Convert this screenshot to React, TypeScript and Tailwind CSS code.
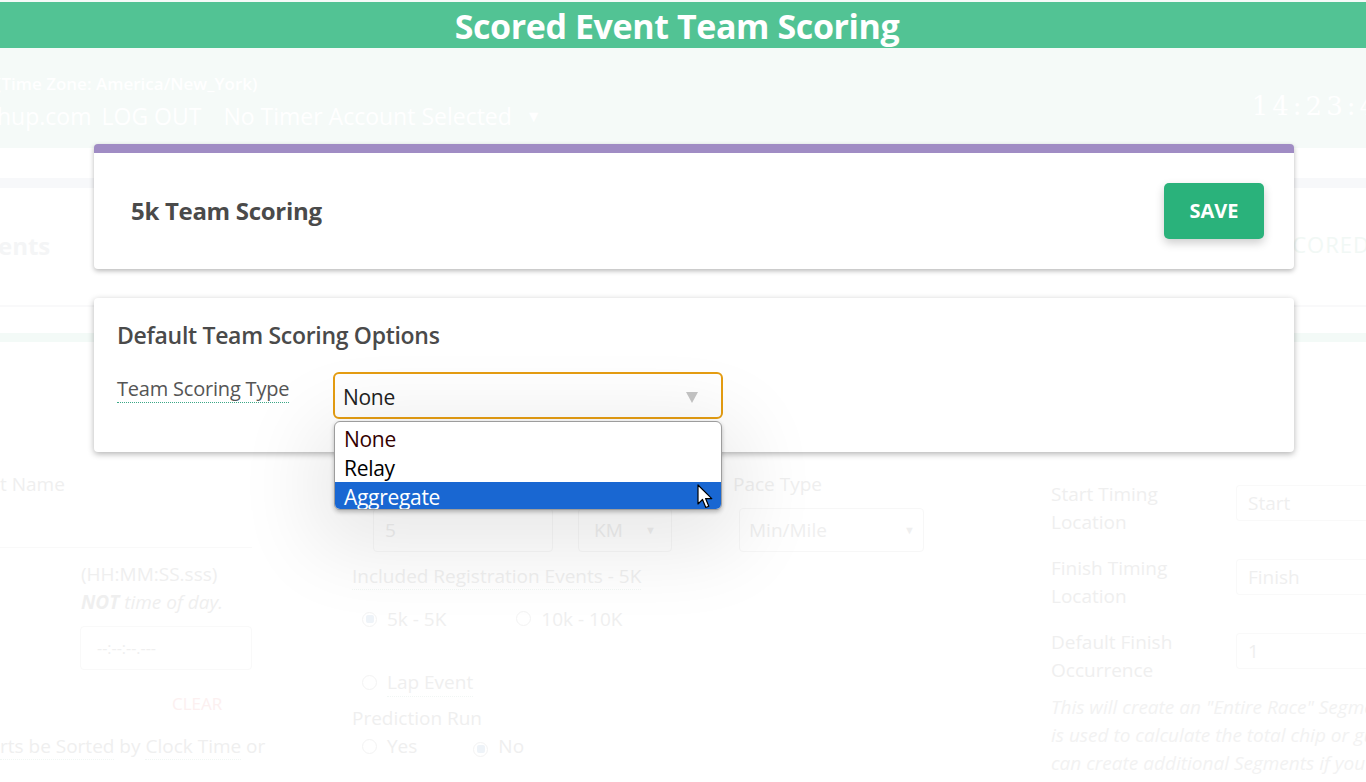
import React from 'react';

const faint = 'text-[#efefef]';

const Radio = ({ on }: { on?: boolean }) => (
  <span className="inline-flex w-[15px] h-[15px] rounded-full border border-[#f3f3f3] items-center justify-center">
    {on && <span className="w-[8px] h-[8px] rounded-[2px] bg-[#eef3f8]" />}
  </span>
);

const Cursor = () => (
  <svg width="17" height="26" viewBox="0 0 17 26" className="absolute left-[362px] top-[62px]">
    <path d="M1 1 L1 20 L5.5 15.5 L8.8 23.5 L11.8 22.2 L8.6 14.6 L14.8 14.6 Z" fill="#fff" stroke="#000" strokeWidth="1.2" strokeLinejoin="round" />
  </svg>
);

function BackgroundPage() {
  return (
    <div className="flex flex-col">
      {/* header of the page behind the modal */}
      <div className="h-[148px] bg-[#f5faf8] flex flex-col pt-[72px] text-white">
        <div className="ml-[-4px] text-[17px] font-semibold leading-[24px] whitespace-nowrap">(Time Zone: America/New_York)</div>
        <div className="ml-[-3px] mt-[5px] flex items-center text-[23px] leading-[30px] whitespace-nowrap">
          <span>hup.com</span>
          <span className="ml-[10px]">LOG OUT</span>
          <span className="ml-[22px]">No Timer Account Selected</span>
          <span className="ml-[14px] text-[16px]">▼</span>
          <span className="ml-auto mr-[-14px] font-['DejaVu_Serif',serif] font-light text-[26px] tracking-[4px] -mt-[20px]">14:23:4</span>
        </div>
      </div>
      <div className="h-[30px]" />
      <div className="h-[10px] bg-[#f7f8fa]" />
      <div className="h-[117px] flex items-center justify-between">
        <span className="text-[24px] font-bold text-[#f4f5f6] ml-[-2px] mt-[-2px]">ents</span>
        <span className="text-[22px] text-[#f1f8f5] mr-[-4px] mt-[-4px] tracking-[1px]">CORED</span>
      </div>
      <div className="h-[2px] bg-[#f9f9fa]" />
      <div className="h-[26px]" />
      <div className="h-[9px] bg-[#f3faf7]" />
      <div className="h-[128px]" />

      {/* faded form */}
      <div className={`flex text-[19px] leading-[28px] ${faint}`}>
        <div className="w-[352px] shrink-0 flex flex-col">
          <div>t Name</div>
          <div className="mt-[6px] h-[44px] w-[252px] border-b border-[#f9f9f9]" />
          <div className="pl-[81px] mt-[12px]">(HH:MM:SS.sss)</div>
          <div className="pl-[81px] italic"><b>NOT</b> time of day.</div>
          <div className="ml-[80px] mt-[10px] w-[172px] h-[44px] rounded-[4px] border border-[#f9f9f9] flex items-center pl-[16px] text-[16px]">--:--:--.---</div>
          <div className="pl-[172px] mt-[20px] text-[17px] text-[#fcf0f0]">CLEAR</div>
          <div className="mt-[14px] whitespace-nowrap"><span className="border-b border-dotted border-[#f1f6f4]">rts be Sorted</span> by <span className="border-b border-dotted border-[#f1f6f4]">Clock Time</span> or</div>
        </div>
        <div className="w-[699px] shrink-0 flex flex-col">
          <div className="flex">
            <div className="w-[226px] pt-[38px] pl-[21px]">
              <div className="h-[44px] w-[180px] rounded-[4px] border border-[#f7f7f7] flex items-center pl-[11px]">5</div>
            </div>
            <div className="w-[155px] pt-[38px]">
              <div className="h-[44px] w-[94px] rounded-[4px] border border-[#f7f7f7] flex items-center justify-between px-[15px]">KM <span className="text-[11px]">▼</span></div>
            </div>
            <div className="flex flex-col">
              <div>Pace Type</div>
              <div className="mt-[10px] ml-[6px] h-[44px] w-[185px] rounded-[4px] border border-[#f7f7f7] flex items-center justify-between pl-[9px] pr-[8px]">Min/Mile <span className="text-[11px]">▼</span></div>
            </div>
          </div>
          <div className="mt-[10px]"><span className="border-b border-dotted border-[#f1f6f4]">Included Registration Events - 5K</span></div>
          <div className="mt-[15px] flex items-center pl-[10px] gap-[10px]">
            <Radio on /><span>5k - 5K</span>
            <span className="ml-[60px]"><Radio /></span><span>10k - 10K</span>
          </div>
          <div className="mt-[35px] flex items-center pl-[10px] gap-[10px]">
            <Radio /><span className="border-b border-dotted border-[#f1f6f4]">Lap Event</span>
          </div>
          <div className="mt-[7px]">Prediction Run</div>
          <div className="flex items-center pl-[10px] gap-[10px]">
            <Radio /><span>Yes</span>
            <span className="ml-[46px]"><Radio on /></span><span>No</span>
          </div>
        </div>
        <div className="flex-1 min-w-0 flex flex-col pt-[10px]">
          {[
            ['Start Timing', 'Location', 'Start'],
            ['Finish Timing', 'Location', 'Finish'],
            ['Default Finish', 'Occurrence', '1'],
          ].map(([a, b, v]) => (
            <div key={a} className="flex h-[74px]">
              <div className="w-[185px] shrink-0">
                <div>{a}</div>
                <div>{b}</div>
              </div>
              <div className="flex-1 h-[36px] mt-[5px] rounded-l-[4px] border border-r-0 border-[#f9f9f9] flex items-center pl-[11px]">{v}</div>
            </div>
          ))}
          <div className="-mt-[9px] italic text-[#f2f2f2] whitespace-nowrap">
            <div>This will create an "Entire Race" Segment that</div>
            <div>is used to calculate the total chip or gun time. You</div>
            <div>can create additional Segments if you want.</div>
          </div>
        </div>
      </div>
    </div>
  );
}

export default function App() {
  return (
    <div className="relative w-[1366px] h-[782px] overflow-hidden bg-white font-['Open_Sans',sans-serif]">
      <BackgroundPage />

      {/* modal layer */}
      <div className="absolute inset-0 flex flex-col">
        <div className="mt-[2px] h-[46px] bg-[#52c394] flex items-center justify-center pr-[12px]">
          <h1 className="text-white font-bold text-[34px] leading-none tracking-[-0.4px] mt-[2px]">Scored Event Team Scoring</h1>
        </div>

        <div className="pl-[94px] pt-[96px] flex flex-col gap-[29px] w-[1294px]">
          {/* title card */}
          <div className="h-[125px] bg-white rounded-[4px] border-t-[9px] border-[#a08cc4] shadow-[0_2px_5px_rgba(0,0,0,0.28)] flex items-center justify-between pl-[37px] pr-[30px]">
            <h2 className="text-[24px] font-bold text-[#4a4a4a] tracking-[-0.3px]">5k Team Scoring</h2>
            <button className="w-[100px] h-[56px] rounded-[5px] bg-[#2ab27b] text-white font-bold text-[20px] shadow-[0_4px_10px_rgba(0,0,0,0.2)]">
              SAVE
            </button>
          </div>

          {/* options card */}
          <div className="h-[154px] bg-white rounded-[4px] shadow-[0_2px_6px_rgba(0,0,0,0.3)] px-[23px] pt-[22px]">
            <h3 className="text-[23px] font-semibold text-[#4a4a4a] leading-[30px] tracking-[-0.3px]">Default Team Scoring Options</h3>
            <div className="mt-[22px] flex items-start">
              <div className="w-[216px] pt-[3px]">
                <span className="text-[20px] text-[#555] leading-[28px] border-b border-dotted border-[#3aa886] tracking-[-0.2px]">Team Scoring Type</span>
              </div>
              <div className="relative">
                <div className="w-[390px] h-[47px] rounded-[6px] border-2 border-[#e59d12] flex items-center justify-between pl-[8px] pr-[23px]">
                  <span className="text-[21px] text-[#222] tracking-[-0.3px] mt-[5px]">None</span>
                  <svg width="12" height="11" viewBox="0 0 12 11" className="mt-[4px]">
                    <path d="M0 0 H12 L6 11 Z" fill="#c5c5c5" />
                  </svg>
                </div>
                {/* open dropdown list */}
                <div className="absolute left-[1px] top-[49px] w-[388px] bg-white rounded-[6px] border border-[#9d9d9d] overflow-hidden shadow-[0_2px_4px_rgba(0,0,0,0.25),0_20px_80px_20px_rgba(0,0,0,0.09)] text-[21px] leading-[29px] tracking-[-0.3px]">
                  <div className="h-[31px] pt-[3px] pl-[9px] text-[#300]">None</div>
                  <div className="h-[29px] pt-[1px] pl-[9px] text-black">Relay</div>
                  <div className="h-[27px] pl-[9px] bg-[#1967d2] text-white leading-[27px] pt-[2px]">Aggregate</div>
                  <Cursor />
                </div>
              </div>
            </div>
          </div>
        </div>
      </div>
    </div>
  );
}
